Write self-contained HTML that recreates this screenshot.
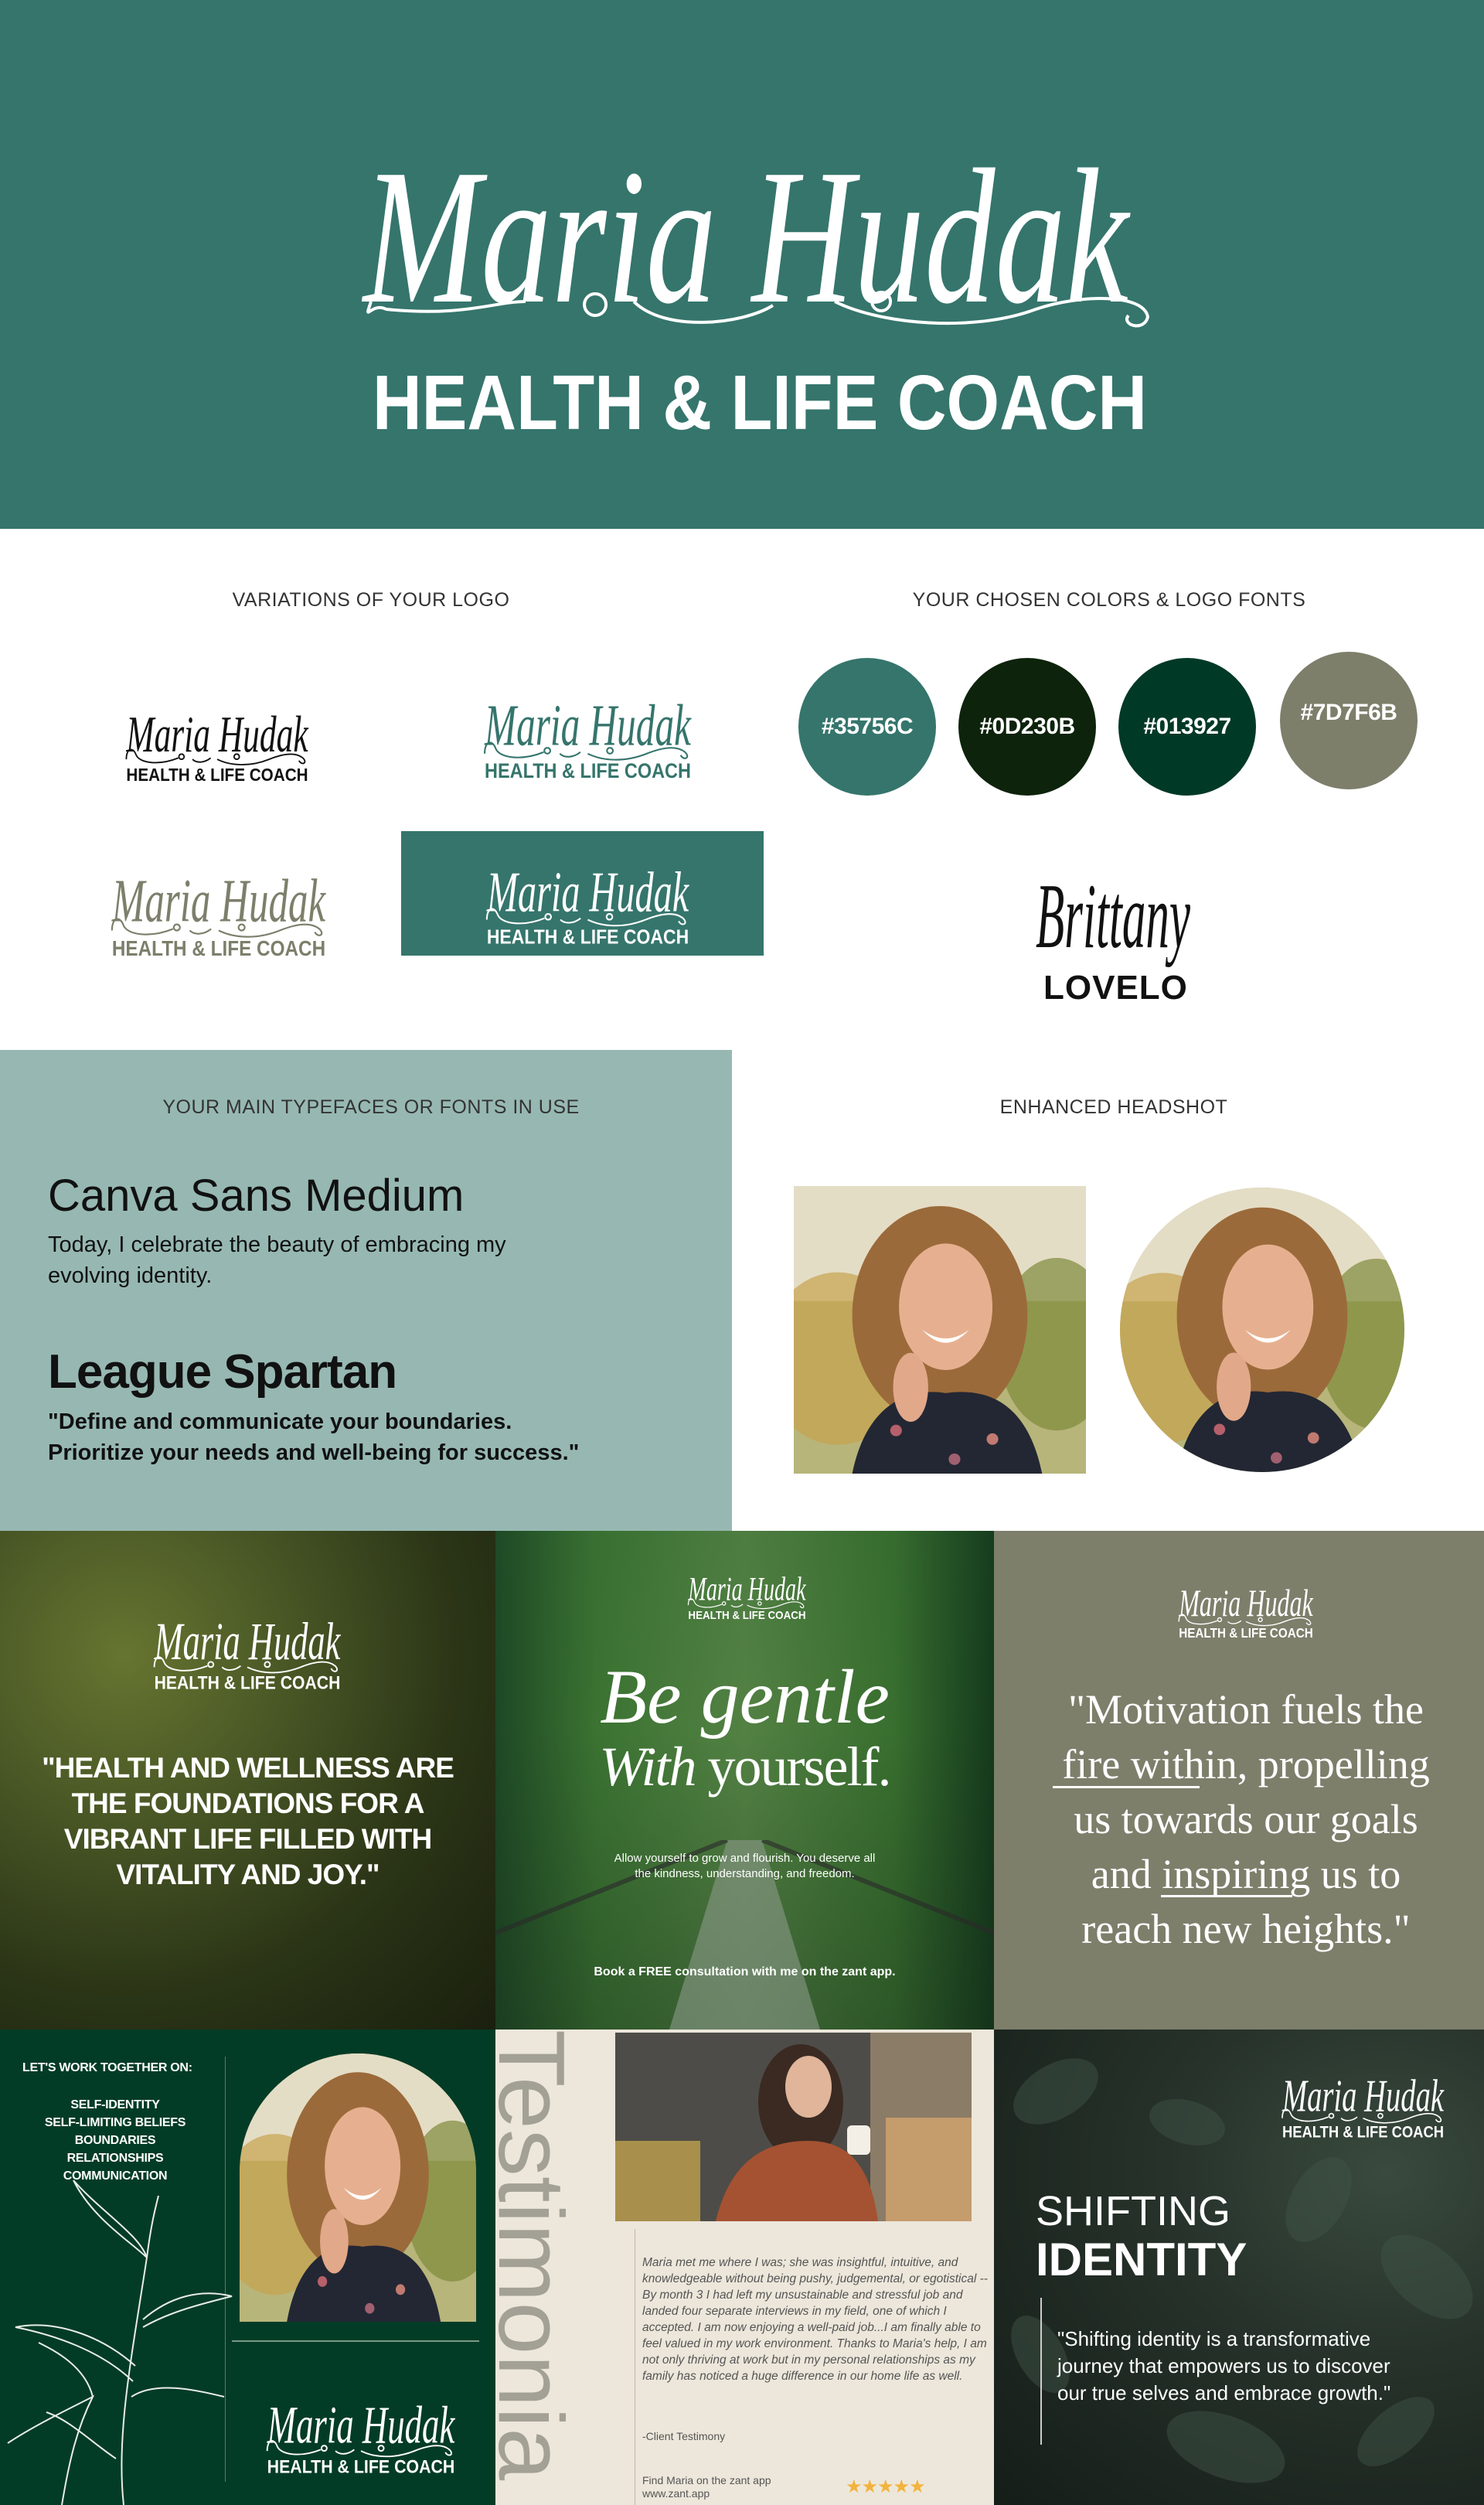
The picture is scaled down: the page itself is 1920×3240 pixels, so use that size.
<!DOCTYPE html>
<html><head><meta charset="utf-8">
<style>
*{margin:0;padding:0;box-sizing:border-box}
body{width:1920px;height:3240px;position:relative;overflow:hidden;background:#fff;font-family:"Liberation Sans",sans-serif}
.a{position:absolute}
.lbl{position:absolute;font-size:25px;color:#333;letter-spacing:0.5px;text-align:center;transform:translateX(-50%);white-space:nowrap}
svg{display:block}
.circ{position:absolute;width:178px;height:178px;border-radius:50%;color:#fff;font-weight:bold;font-size:30px;display:flex;align-items:center;justify-content:center;letter-spacing:-0.5px}
</style></head><body>

<svg width="0" height="0" style="position:absolute">
<defs>
<g id="swash"><path d="M10 112 C 10 95, 20 92, 25 105 C 30 118, 60 122, 90 110 M95 104 a4 4 0 1 0 0.1 0 M150 112 C 170 122, 200 124, 230 112 C 250 104, 270 100, 282 110 C 290 118, 280 122, 276 114 M180 104 a4 4 0 1 0 0.1 0 M112 112 C 118 118, 130 118, 140 110" fill="none" stroke="currentColor" stroke-width="2.2"/></g>
<g id="photo">
<rect width="100" height="100" fill="#b7b57a"/>
<rect width="100" height="40" fill="#e4ddc6"/>
<ellipse cx="15" cy="60" rx="25" ry="30" fill="#c6a34f" opacity=".7"/>
<ellipse cx="90" cy="55" rx="20" ry="30" fill="#7d8a3a" opacity=".7"/>
<ellipse cx="50" cy="45" rx="30" ry="38" fill="#9b6a3a"/>
<ellipse cx="52" cy="42" rx="16" ry="22" fill="#e6b090"/>
<path d="M44 50 q8 6 16 0 q-8 9 -16 0z" fill="#fff"/>
<path d="M20 100 C 25 75, 40 70, 52 72 C 66 70, 80 75, 85 100z" fill="#232733"/>
<circle cx="35" cy="85" r="2" fill="#b5606a"/><circle cx="68" cy="88" r="2" fill="#c07a70"/><circle cx="55" cy="95" r="2" fill="#a06070"/>
<ellipse cx="40" cy="70" rx="6" ry="12" fill="#e2a88a"/>
</g>
</defs>
</svg>

<!-- HEADER -->
<div class="a" style="left:0;top:0;width:1920px;height:684px;background:#35756C"></div>
<svg class="a" style="left:440px;top:90px" width="1060" height="480" viewBox="0 0 1060 480" color="#fff">
<text x="30" y="300" font-family="Liberation Serif" font-style="italic" font-size="250" fill="#fff" textLength="990" lengthAdjust="spacingAndGlyphs">Maria Hudak</text>
<path d="M40 300 C 30 330, 40 300, 60 310 C 160 320, 200 300, 240 300 M330 290 a14 14 0 1 0 0.1 0 M380 300 C 420 340, 520 330, 560 305 M640 300 C 700 330, 820 340, 900 310 C 960 290, 1040 290, 1045 320 C 1040 340, 1010 330, 1020 318 M700 288 a12 12 0 1 0 0.1 0" fill="none" stroke="#fff" stroke-width="4"/>
<text x="42" y="465" font-family="Liberation Sans" font-weight="bold" font-size="100" fill="#fff" textLength="1002" lengthAdjust="spacingAndGlyphs">HEALTH &amp; LIFE COACH</text>
</svg>

<!-- SECTION 2 -->
<div class="lbl" style="left:480px;top:762px">VARIATIONS OF YOUR LOGO</div>
<div class="lbl" style="left:1435px;top:762px">YOUR CHOSEN COLORS &amp; LOGO FONTS</div>

<svg class="a" style="left:155px;top:888px" width="252" height="126" viewBox="0 0 300 150" color="#111"><text x="10" y="100" font-family="Liberation Serif" font-style="italic" font-size="80" fill="#111" textLength="280" lengthAdjust="spacingAndGlyphs">Maria Hudak</text><use href="#swash"/><text x="10" y="145" font-weight="bold" font-size="28" fill="#111" textLength="280" lengthAdjust="spacingAndGlyphs">HEALTH &amp; LIFE COACH</text></svg>
<svg class="a" style="left:617px;top:868px" width="287" height="143" viewBox="0 0 300 150" color="#35756C"><text x="10" y="100" font-family="Liberation Serif" font-style="italic" font-size="80" fill="#35756C" textLength="280" lengthAdjust="spacingAndGlyphs">Maria Hudak</text><use href="#swash"/><text x="10" y="145" font-weight="bold" font-size="28" fill="#35756C" textLength="280" lengthAdjust="spacingAndGlyphs">HEALTH &amp; LIFE COACH</text></svg>
<svg class="a" style="left:135px;top:1093px" width="296" height="148" viewBox="0 0 300 150" color="#7D7F6B"><text x="10" y="100" font-family="Liberation Serif" font-style="italic" font-size="80" fill="#7D7F6B" textLength="280" lengthAdjust="spacingAndGlyphs">Maria Hudak</text><use href="#swash"/><text x="10" y="145" font-weight="bold" font-size="28" fill="#7D7F6B" textLength="280" lengthAdjust="spacingAndGlyphs">HEALTH &amp; LIFE COACH</text></svg>
<div class="a" style="left:519px;top:1075px;width:469px;height:161px;background:#35756C"></div>
<svg class="a" style="left:620px;top:1085px" width="281" height="140" viewBox="0 0 300 150" color="#fff"><text x="10" y="100" font-family="Liberation Serif" font-style="italic" font-size="80" fill="#fff" textLength="280" lengthAdjust="spacingAndGlyphs">Maria Hudak</text><use href="#swash"/><text x="10" y="145" font-weight="bold" font-size="28" fill="#fff" textLength="280" lengthAdjust="spacingAndGlyphs">HEALTH &amp; LIFE COACH</text></svg>

<div class="circ" style="left:1033px;top:851px;background:#35756C">#35756C</div>
<div class="circ" style="left:1240px;top:851px;background:#0D230B">#0D230B</div>
<div class="circ" style="left:1447px;top:851px;background:#013927">#013927</div>
<div class="circ" style="left:1656px;top:843px;background:#7D7F6B;align-items:flex-start;padding-top:62px">#7D7F6B</div>

<svg class="a" style="left:1320px;top:1100px" width="240" height="160" viewBox="0 0 240 160">
<text x="20" y="125" font-family="Liberation Serif" font-style="italic" font-size="120" fill="#111" textLength="200" lengthAdjust="spacingAndGlyphs">Brittany</text>
</svg>
<div class="a" style="left:1350px;top:1253px;font-weight:bold;font-size:44px;color:#111;letter-spacing:1px">LOVELO</div>

<!-- SECTION 3 -->
<div class="a" style="left:0;top:1358px;width:947px;height:622px;background:#97B8B2"></div>
<div class="lbl" style="left:480px;top:1418px">YOUR MAIN TYPEFACES OR FONTS IN USE</div>
<div class="lbl" style="left:1441px;top:1418px">ENHANCED HEADSHOT</div>
<div class="a" style="left:62px;top:1513px;font-size:58px;color:#111">Canva Sans Medium</div>
<div class="a" style="left:62px;top:1590px;font-size:29px;line-height:40px;color:#111">Today, I celebrate the beauty of embracing my<br>evolving identity.</div>
<div class="a" style="left:62px;top:1739px;font-size:62px;font-weight:bold;color:#111;letter-spacing:-1px">League Spartan</div>
<div class="a" style="left:62px;top:1819px;font-size:29px;line-height:40px;font-weight:bold;color:#111">"Define and communicate your boundaries.<br>Prioritize your needs and well-being for success."</div>
<svg class="a" style="left:1027px;top:1534px" width="378" height="372" viewBox="0 0 100 100" preserveAspectRatio="none"><use href="#photo"/></svg>
<svg class="a" style="left:1449px;top:1536px" width="368" height="368" viewBox="0 0 100 100"><clipPath id="cc"><circle cx="50" cy="50" r="50"/></clipPath><g clip-path="url(#cc)"><use href="#photo"/></g></svg>

<!-- ROW 1 -->
<div class="a" style="left:0;top:1980px;width:641px;height:645px;background:radial-gradient(ellipse at 25% 25%,#667530 0%,#4a5826 30%,#2a3416 65%,#1a200e 100%)"></div>
<svg class="a" style="left:191px;top:2060px" width="258" height="129" viewBox="0 0 300 150" color="#fff"><text x="10" y="100" font-family="Liberation Serif" font-style="italic" font-size="80" fill="#fff" textLength="280" lengthAdjust="spacingAndGlyphs">Maria Hudak</text><use href="#swash"/><text x="10" y="145" font-weight="bold" font-size="28" fill="#fff" textLength="280" lengthAdjust="spacingAndGlyphs">HEALTH &amp; LIFE COACH</text></svg>
<div class="a" style="left:0;top:2264px;width:641px;text-align:center;color:#fff;font-weight:bold;font-size:37px;line-height:46px;letter-spacing:-1px">"HEALTH AND WELLNESS ARE<br>THE FOUNDATIONS FOR A<br>VIBRANT LIFE FILLED WITH<br>VITALITY AND JOY."</div>

<div class="a" style="left:641px;top:1980px;width:645px;height:645px;background:linear-gradient(90deg,#1f4a25 0%,#3f7a34 20%,#5a8a48 50%,#3c7530 80%,#143a1c 100%)"></div>
<div class="a" style="left:641px;top:1980px;width:645px;height:645px;background:linear-gradient(180deg,rgba(30,70,40,.2),rgba(20,50,30,.1) 40%,rgba(20,40,25,.4))"></div>
<svg class="a" style="left:641px;top:2380px" width="645" height="245" viewBox="0 0 645 245"><polygon points="300,0 345,0 420,245 225,245" fill="#8a9a88" opacity=".6"/><path d="M300 0 L0 120 M345 0 L645 120" stroke="#2a2a2a" stroke-width="6" opacity=".6"/></svg>
<svg class="a" style="left:885px;top:2015px" width="163" height="82" viewBox="0 0 300 150" color="#fff"><text x="10" y="100" font-family="Liberation Serif" font-style="italic" font-size="80" fill="#fff" textLength="280" lengthAdjust="spacingAndGlyphs">Maria Hudak</text><use href="#swash"/><text x="10" y="145" font-weight="bold" font-size="28" fill="#fff" textLength="280" lengthAdjust="spacingAndGlyphs">HEALTH &amp; LIFE COACH</text></svg>
<div class="a" style="left:641px;top:2140px;width:645px;text-align:center;color:#fff;font-family:'Liberation Serif',serif;font-style:italic;font-size:100px;line-height:110px">Be gentle</div>
<div class="a" style="left:641px;top:2245px;width:645px;text-align:center;color:#fff;font-family:'Liberation Serif',serif;font-size:72px;line-height:80px;letter-spacing:-2px"><i>With</i> yourself.</div>
<div class="a" style="left:641px;top:2394px;width:645px;text-align:center;color:#fff;font-size:15px;line-height:20px">Allow yourself to grow and flourish. You deserve all<br>the kindness, understanding, and freedom.</div>
<div class="a" style="left:641px;top:2542px;width:645px;text-align:center;color:#fff;font-size:16px;font-weight:bold">Book a FREE consultation with me on the zant app.</div>

<div class="a" style="left:1286px;top:1980px;width:634px;height:645px;background:#7D7F6B"></div>
<svg class="a" style="left:1519px;top:2028px" width="186" height="93" viewBox="0 0 300 150" color="#fff"><text x="10" y="100" font-family="Liberation Serif" font-style="italic" font-size="80" fill="#fff" textLength="280" lengthAdjust="spacingAndGlyphs">Maria Hudak</text><use href="#swash"/><text x="10" y="145" font-weight="bold" font-size="28" fill="#fff" textLength="280" lengthAdjust="spacingAndGlyphs">HEALTH &amp; LIFE COACH</text></svg>
<div class="a" style="left:1286px;top:2176px;width:652px;text-align:center;color:#fff;font-family:'Liberation Serif',serif;font-size:54px;line-height:71px">"Motivation fuels the<br>fire within, propelling<br>us towards our goals<br>and inspiring us to<br>reach new heights."</div>
<div class="a" style="left:1362px;top:2310px;width:190px;height:3px;background:#fff"></div>
<div class="a" style="left:1502px;top:2451px;width:170px;height:3px;background:#fff"></div>

<!-- ROW 2 -->
<div class="a" style="left:0;top:2625px;width:641px;height:615px;background:#033C26"></div>
<div class="a" style="left:29px;top:2666px;color:#fff;font-weight:bold;font-size:16px;letter-spacing:-0.3px">LET'S WORK TOGETHER ON:</div>
<div class="a" style="left:29px;top:2711px;width:240px;text-align:center;color:#fff;font-weight:bold;font-size:16px;line-height:23px;letter-spacing:-0.3px">SELF-IDENTITY<br>SELF-LIMITING BELIEFS<br>BOUNDARIES<br>RELATIONSHIPS<br>COMMUNICATION</div>
<div class="a" style="left:291px;top:2660px;width:1px;height:550px;background:#5a7a68"></div>
<svg class="a" style="left:310px;top:2656px" width="306" height="347" viewBox="0 0 100 113" preserveAspectRatio="none"><clipPath id="ar"><path d="M0 113 V50 A50 50 0 0 1 100 50 V113z"/></clipPath><g clip-path="url(#ar)"><use href="#photo" transform="scale(1,1.13)"/></g></svg>
<div class="a" style="left:300px;top:3027px;width:320px;height:2px;background:#7a9a88"></div>
<svg class="a" style="left:0;top:2800px" width="310" height="440" viewBox="0 0 310 440" fill="none" stroke="#e8ede8" stroke-width="2">
<path d="M160 440 C 150 350, 170 250, 190 120 M190 120 C 195 80, 200 60, 205 40 M190 120 C 170 100, 120 70, 95 20 C 130 60, 180 90, 190 120 M185 200 C 220 170, 260 160, 300 170 C 260 180, 220 190, 185 210 M175 260 C 130 220, 70 200, 20 210 C 70 220, 130 240, 172 280 M170 300 C 200 280, 250 290, 290 300 M80 440 C 90 380, 100 340, 120 300 C 80 320, 40 340, 10 360 M120 300 C 110 260, 70 240, 50 230 M150 380 C 120 360, 90 330, 60 320"/>
</svg>
<svg class="a" style="left:337px;top:3073px" width="260" height="130" viewBox="0 0 300 150" color="#fff"><text x="10" y="100" font-family="Liberation Serif" font-style="italic" font-size="80" fill="#fff" textLength="280" lengthAdjust="spacingAndGlyphs">Maria Hudak</text><use href="#swash"/><text x="10" y="145" font-weight="bold" font-size="28" fill="#fff" textLength="280" lengthAdjust="spacingAndGlyphs">HEALTH &amp; LIFE COACH</text></svg>

<div class="a" style="left:641px;top:2625px;width:645px;height:615px;background:#EDE7DB"></div>
<div class="a" style="left:642px;top:2625px;width:90px;height:615px;overflow:hidden">
<div style="position:absolute;left:92px;top:0;transform-origin:0 0;transform:rotate(90deg);font-size:122px;color:#A3A096;white-space:nowrap;line-height:92px">Testimonia</div></div>
<svg class="a" style="left:796px;top:2629px" width="461" height="244" viewBox="0 0 461 244" preserveAspectRatio="none">
<rect width="461" height="244" fill="#4e4c48"/><rect x="330" y="0" width="131" height="244" fill="#8a7c66"/><rect x="350" y="110" width="111" height="134" fill="#c59c6c"/>
<rect x="0" y="140" width="110" height="104" fill="#a8904c"/>
<ellipse cx="240" cy="90" rx="55" ry="75" fill="#3a2a22"/>
<ellipse cx="250" cy="70" rx="30" ry="40" fill="#e0b59a"/>
<path d="M130 244 C 150 160, 200 140, 250 140 C 300 140, 330 170, 340 244z" fill="#a45232"/>
<rect x="300" y="120" width="30" height="38" rx="6" fill="#f3efe6"/>
</svg>
<div class="a" style="left:821px;top:2883px;width:1px;height:357px;background:#bdb6a8"></div>
<div class="a" style="left:831px;top:2916px;width:450px;font-size:15.5px;line-height:21px;color:#555;font-style:italic">Maria met me where I was; she was insightful, intuitive, and knowledgeable without being pushy, judgemental, or egotistical -- By month 3 I had left my unsustainable and stressful job and landed four separate interviews in my field, one of which I accepted. I am now enjoying a well-paid job...I am finally able to feel valued in my work environment. Thanks to Maria's help, I am not only thriving at work but in my personal relationships as my family has noticed a huge difference in our home life as well.</div>
<div class="a" style="left:831px;top:3143px;font-size:14px;color:#555">-Client Testimony</div>
<div class="a" style="left:831px;top:3200px;font-size:14px;line-height:17px;color:#555">Find Maria on the zant app<br>www.zant.app</div>
<div class="a" style="left:1094px;top:3202px;font-size:24px;color:#F2B33D;letter-spacing:-1px">★★★★★</div>

<div class="a" style="left:1286px;top:2625px;width:634px;height:615px;background:radial-gradient(ellipse at 80% 30%,#3a4a3e 0%,#26322a 40%,#151d18 100%)"></div>
<svg class="a" style="left:1286px;top:2625px" width="634" height="615" viewBox="0 0 634 615" opacity=".5">
<g fill="#3f5245"><ellipse cx="80" cy="80" rx="60" ry="35" transform="rotate(-30 80 80)"/><ellipse cx="560" cy="320" rx="70" ry="40" transform="rotate(40 560 320)"/><ellipse cx="420" cy="220" rx="60" ry="35" transform="rotate(-60 420 220)"/><ellipse cx="300" cy="540" rx="80" ry="40" transform="rotate(20 300 540)"/><ellipse cx="520" cy="520" rx="60" ry="30" transform="rotate(-40 520 520)"/><ellipse cx="60" cy="420" rx="55" ry="30" transform="rotate(60 60 420)"/><ellipse cx="250" cy="120" rx="50" ry="28" transform="rotate(15 250 120)"/></g></svg>
<svg class="a" style="left:1651px;top:2656px" width="225" height="112" viewBox="0 0 300 150" color="#fff"><text x="10" y="100" font-family="Liberation Serif" font-style="italic" font-size="80" fill="#fff" textLength="280" lengthAdjust="spacingAndGlyphs">Maria Hudak</text><use href="#swash"/><text x="10" y="145" font-weight="bold" font-size="28" fill="#fff" textLength="280" lengthAdjust="spacingAndGlyphs">HEALTH &amp; LIFE COACH</text></svg>
<div class="a" style="left:1340px;top:2829px;color:#fff;font-size:54px;letter-spacing:0px">SHIFTING</div>
<div class="a" style="left:1340px;top:2888px;color:#fff;font-size:60px;font-weight:bold">IDENTITY</div>
<div class="a" style="left:1346px;top:2972px;width:2px;height:190px;background:#ccc"></div>
<div class="a" style="left:1368px;top:3008px;color:#fff;font-size:26px;line-height:35px">"Shifting identity is a transformative<br>journey that empowers us to discover<br>our true selves and embrace growth."</div>
</body></html>
